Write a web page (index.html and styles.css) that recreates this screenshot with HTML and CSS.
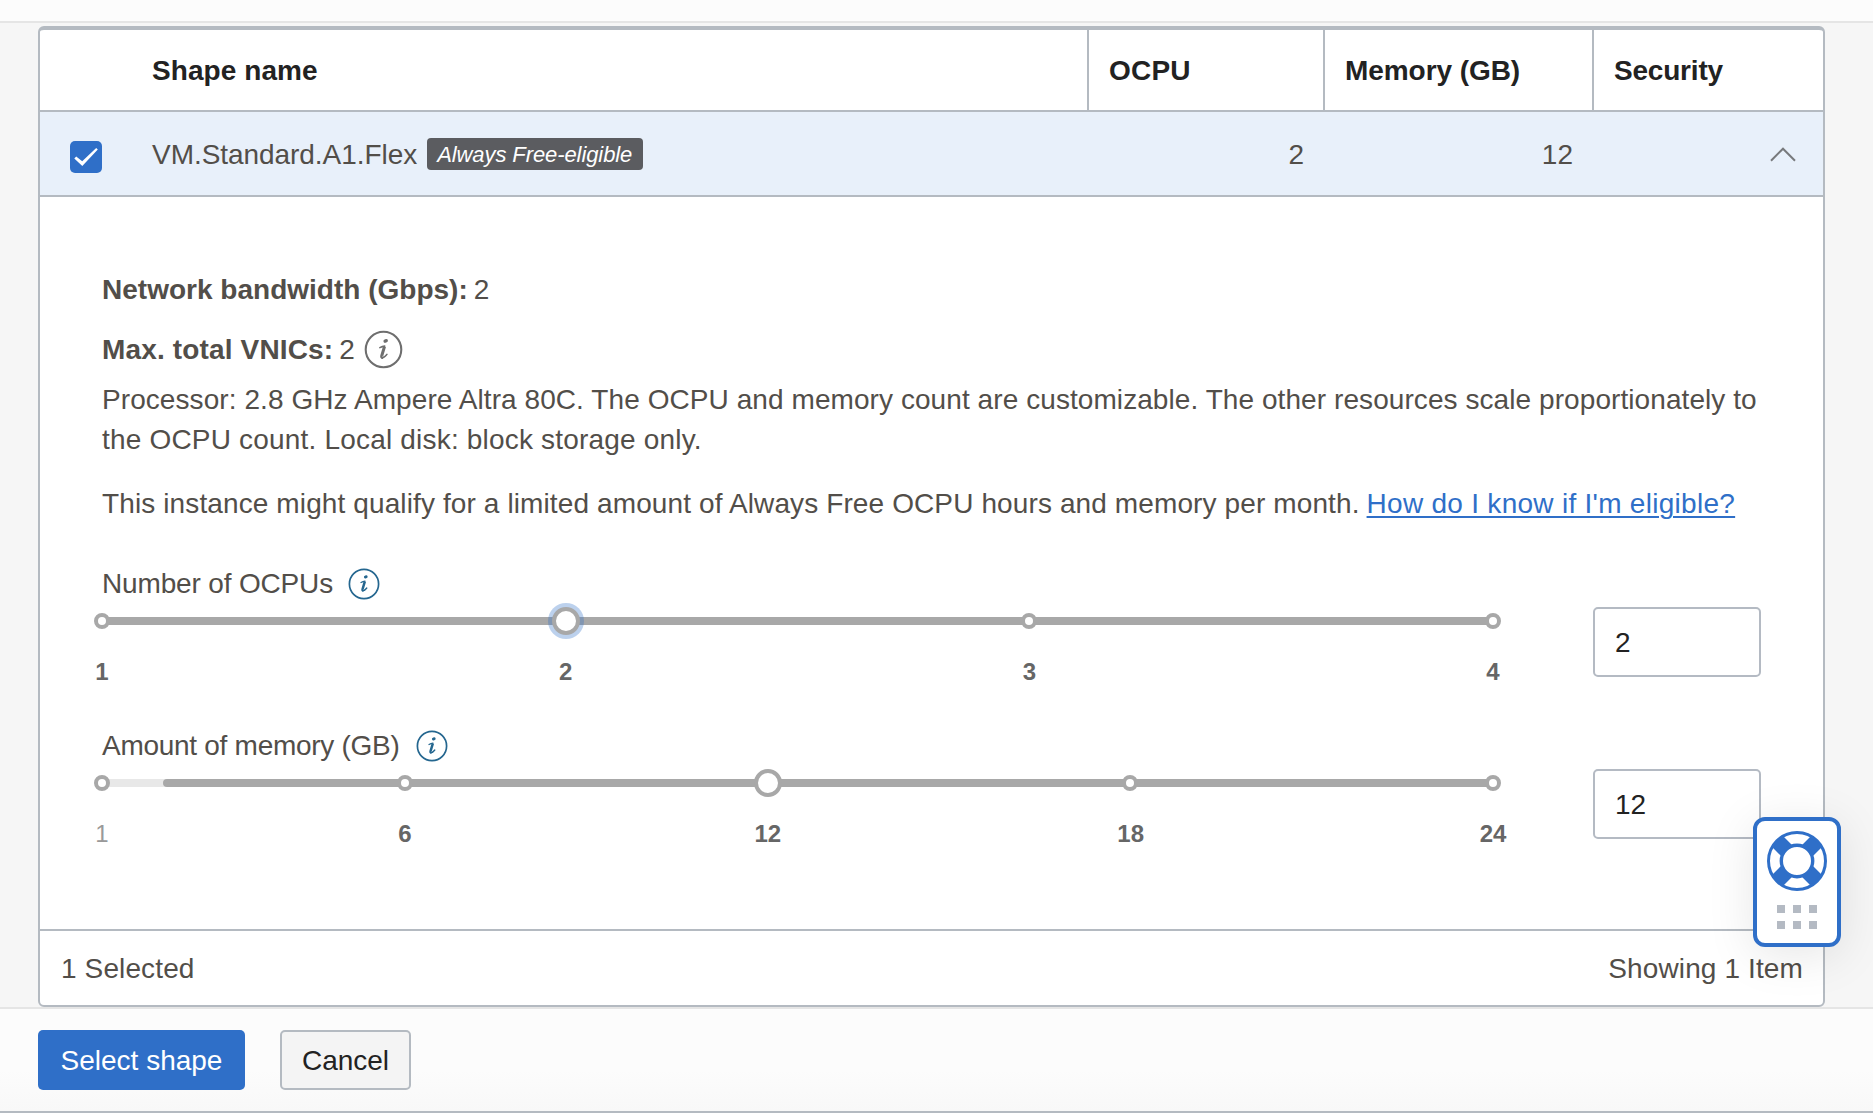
FILE: index.html
```html
<!DOCTYPE html>
<html lang="en">
<head>
<meta charset="utf-8">
<title>Browse all shapes</title>
<link rel="stylesheet" href="styles.css">
</head>
<body>
<svg class="defs" aria-hidden="true">
  <symbol id="info" viewBox="0 0 32 32">
    <circle cx="16" cy="16" r="14.6" fill="none" stroke="currentColor" stroke-width="1.7"/>
    <ellipse cx="17.8" cy="8.9" rx="1.9" ry="1.5" fill="currentColor" transform="rotate(-20 17.8 8.9)"/>
    <path d="M13 14.5Q15 13.4 17 13.2" fill="none" stroke="currentColor" stroke-width="1.3" stroke-linecap="round"/>
    <path d="M16.8 13.6L14.6 21Q14.2 22.8 15.4 22.4" fill="none" stroke="currentColor" stroke-width="2.5" stroke-linejoin="round"/>
    <path d="M14.5 22.7Q16.8 22.8 18.8 20" fill="none" stroke="currentColor" stroke-width="1.3" stroke-linecap="round"/>
  </symbol>
</svg>
<div class="page">
  <div class="top-strip"></div>
  <main class="content">
    <section class="table">
      <div class="row head">
        <div class="cell name">Shape name</div>
        <div class="cell ocpu-head">OCPU</div>
        <div class="cell">Memory (GB)</div>
        <div class="cell security">Security</div>
      </div>
      <div class="row selected">
        <div class="shape">
          <svg class="check" viewBox="0 0 32 32"><rect width="32" height="32" rx="5"/><path d="M4.3 17.4L6.2 15.5L12.2 20.3L26.2 7L27.8 8.5L12.3 24.9Z" fill="#fff"/></svg>
          <span class="shape-name">VM.Standard.A1.Flex</span>
          <span class="badge">Always Free-eligible</span>
        </div>
        <div class="num">2</div>
        <div class="num">12</div>
        <div class="toggle"><svg viewBox="0 0 26 15"><path d="M1 13.7L13 1.7L25 13.7"/></svg></div>
      </div>
      <div class="detail">
        <div class="fact network"><b>Network bandwidth (Gbps):</b><span>2</span></div>
        <div class="fact vnics"><b>Max. total VNICs:</b><span>2</span><svg class="info-lg"><use href="#info"/></svg></div>
        <p class="processor"><span class="l1">Processor: 2.8 GHz Ampere Altra 80C. The OCPU and memory count are customizable. The other resources scale proportionately to</span> <span class="l2">the OCPU count. Local disk: block storage only.</span></p>
        <p class="free"><span>This instance might qualify for a limited amount of Always Free OCPU hours and memory per month.</span><a href="#">How do I know if I'm eligible?</a></p>
        <div class="field">
          <div class="label"><span class="label-ocpu">Number of OCPUs</span><svg class="info-sm"><use href="#info"/></svg></div>
          <div class="control">
            <div class="slider">
              <div class="track">
                <i class="fill" style="left:0"></i>
                <i class="dot" style="left:0"></i><i class="dot" style="left:66.67%"></i><i class="dot" style="left:100%"></i>
                <i class="thumb focus" style="left:33.33%"></i>
              </div>
              <div class="ticks"><b style="left:0">1</b><b style="left:33.33%">2</b><b style="left:66.67%">3</b><b style="left:100%">4</b></div>
            </div>
            <input type="text" value="2">
          </div>
        </div>
        <div class="field">
          <div class="label"><span class="label-memory">Amount of memory (GB)</span><svg class="info-sm"><use href="#info"/></svg></div>
          <div class="control">
            <div class="slider">
              <div class="track">
                <i class="fill" style="left:4.35%"></i>
                <i class="dot" style="left:0"></i><i class="dot" style="left:21.77%"></i><i class="dot" style="left:73.91%"></i><i class="dot" style="left:100%"></i>
                <i class="thumb" style="left:47.87%"></i>
              </div>
              <div class="ticks"><b class="off" style="left:0">1</b><b style="left:21.77%">6</b><b style="left:47.87%">12</b><b style="left:73.95%">18</b><b style="left:100%">24</b></div>
            </div>
            <input type="text" value="12">
          </div>
        </div>
      </div>
      <div class="summary"><span>1 Selected</span><span>Showing 1 Item</span></div>
    </section>
  </main>
  <footer class="actions">
    <button class="primary">Select shape</button>
    <button class="secondary">Cancel</button>
  </footer>
</div>
<aside class="help">
  <svg class="buoy" viewBox="-30 -30 60 60">
    <circle r="28.7" fill="#fff"/>
    <path d="M-20 -20L20 20M-20 20L20 -20" stroke="#2f6fc8" stroke-width="15.5"/>
    <circle r="28.5" fill="none" stroke="#2f6fc8" stroke-width="3"/>
    <circle r="15.7" fill="#fff" stroke="#2f6fc8" stroke-width="3.4"/>
  </svg>
  <div class="grip"><i></i><i></i><i></i><i></i><i></i><i></i></div>
</aside>
</body>
</html>
```
FILE: styles.css
```css
* { box-sizing: border-box; }
body {
  margin: 0;
  height: 1113px;
  overflow: hidden;
  background: #f6f6f6;
  color: #524e49;
  font: 28px/40px "Liberation Sans", Arial, sans-serif;
}
p { margin: 0; }
.defs { position: absolute; width: 0; height: 0; }
.page { display: flex; flex-direction: column; height: 1113px; }
.top-strip { height: 23px; background: #fcfcfc; border-bottom: 2px solid #e5e5e5; }
.content { height: 984px; padding: 3px 48px 0 38px; }

.table {
  height: 981px;
  background: #fff;
  border: 2px solid #b4bac1;
  border-top-width: 4px;
  border-radius: 6px;
}
.row { display: grid; grid-template-columns: 1047px 236px 269px 1fr; border-bottom: 2px solid #b4bac1; }
.head { height: 82px; color: #222; font-weight: bold; line-height: 81px; }
.cell { padding-left: 20px; border-left: 2px solid #b4bac1; white-space: nowrap; letter-spacing: -.06px; }
.cell.name { padding-left: 112px; border-left: 0; letter-spacing: .08px; }
.cell.ocpu-head { letter-spacing: .2px; }
.cell.security { letter-spacing: -.2px; }
.selected { height: 85px; background: #e8f0fa; line-height: 83px; padding-top: 1px; }
.shape { display: flex; padding-left: 30px; }
.check { width: 32px; height: 32px; margin-top: 28px; fill: #2f6fc8; }
.shape-name { margin-left: 50px; letter-spacing: -.05px; }
.badge {
  height: 32px;
  width: 216px;
  margin: 25px 0 0 10px;
  padding-left: 10px;
  border-radius: 4px;
  background: #5b5c60;
  color: #fff;
  font: italic 22px/33px "Liberation Sans", Arial, sans-serif;
  letter-spacing: -.09px;
  white-space: nowrap;
}
.num { text-align: right; padding-right: 19px; }
.toggle { display: flex; justify-content: flex-end; padding: 34px 27px 0 0; }
.toggle svg { width: 26px; height: 15px; fill: none; stroke: #77797c; stroke-width: 2; }

.detail { height: 734px; padding: 73px 62px 0; border-bottom: 2px solid #b4bac1; }
.fact { display: flex; height: 40px; gap: 6px; }
.network b { letter-spacing: .01px; }
.vnics { margin-top: 20px; }
.vnics b { letter-spacing: .15px; }
.info-lg { width: 39px; height: 39px; margin: 0 0 0 3px; color: #6e6e6e; }
.processor { margin-top: 10px; white-space: nowrap; }
.processor span { display: block; }
.l1 { letter-spacing: .074px; }
.l2 { letter-spacing: .19px; }
.free { display: flex; margin-top: 24px; white-space: nowrap; letter-spacing: .115px; }
.free a {
  margin-left: 7px;
  color: #2f6fc8;
  letter-spacing: .28px;
  text-decoration-thickness: 2px;
  text-underline-offset: 3px;
}

.field { height: 122px; margin-top: 40px; }
.label { display: flex; height: 40px; white-space: nowrap; }
.label-ocpu { width: 230px; letter-spacing: -.16px; }
.label-memory { width: 298px; letter-spacing: -.28px; }
.info-sm { width: 32px; height: 32px; margin: 4px 0 0 16px; color: #24668f; }
.control { display: flex; justify-content: space-between; }
.slider { width: 1391px; padding-top: 13px; }
.track { position: relative; height: 8px; background: #e8e8e8; }
.fill { position: absolute; top: 0; bottom: 0; right: 0; border-radius: 4px; background: #a8a8a8; }
.dot, .thumb {
  position: absolute;
  top: 50%;
  transform: translate(-50%, -50%);
  width: 16px;
  height: 16px;
  border: 4px solid #a8a8a8;
  border-radius: 50%;
  background: #fff;
}
.thumb { width: 28px; height: 28px; }
.focus { box-shadow: 0 0 0 4px rgba(47, 111, 200, .32); }
.ticks { position: relative; height: 30px; margin-top: 32px; color: #666; font-size: 24px; line-height: 30px; }
.ticks b { position: absolute; transform: translateX(-50%); }
.ticks .off { color: #999; font-weight: normal; }
input {
  width: 168px;
  height: 70px;
  margin: 3px 0 0;
  padding: 1px 20px 0;
  border: 2px solid #b4bac3;
  border-radius: 5px;
  background: #fff;
  color: #222;
  font: inherit;
}
.summary { display: flex; justify-content: space-between; padding: 0 20px 0 21px; line-height: 75px; letter-spacing: .12px; }

.actions {
  position: relative;
  z-index: 2;
  display: flex;
  gap: 35px;
  height: 106px;
  padding: 21px 38px 0;
  background: linear-gradient(#fcfcfc 60%, #f8f8f8);
  border-top: 2px solid #e5e5e5;
  border-bottom: 2px solid #b4bac1;
}
button { height: 60px; padding: 2px 0 0; border-radius: 5px; font: inherit; }
.primary { width: 207px; border: 0; background: #2f6fc8; color: #fff; }
.secondary { width: 131px; border: 2px solid #b4bac1; background: #f4f4f4; color: #222; }

.help {
  position: absolute;
  z-index: 1;
  left: 1753px;
  top: 817px;
  width: 88px;
  height: 130px;
  padding-top: 10px;
  display: flex;
  flex-direction: column;
  align-items: center;
  border: 4px solid #2f6fc8;
  border-radius: 12px;
  background: #fff;
  box-shadow: 0 8px 48px rgba(0, 0, 0, .1);
}
.buoy { width: 60px; height: 60px; }
.grip { display: grid; grid-template-columns: repeat(3, 8px); gap: 8px; margin-top: 14px; }
.grip i { height: 8px; background: #b4bac3; }
```
